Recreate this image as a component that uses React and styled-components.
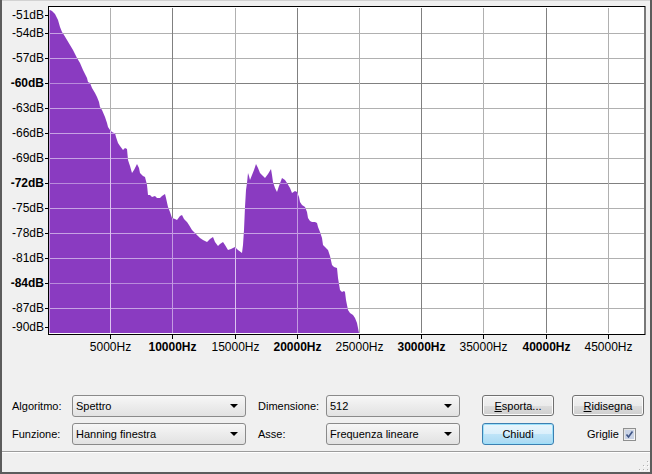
import React from "react";
import styled, { createGlobalStyle } from "styled-components";

const Global = createGlobalStyle`
  html, body { margin: 0; padding: 0; background: #f0f0f0; }
  body { font-family: "Liberation Sans", Arial, sans-serif; }
`;

const Window = styled.div`
  width: 652px;
  height: 474px;
  box-sizing: border-box;
  display: flex;
  flex-direction: column;
  background: #f0f0f0;
  box-shadow: inset 2px 0 #5c5c5c, inset -2px 0 #5c5c5c, inset 0 -2px #5c5c5c,
    inset 0 1px #d2d2d2;
  overflow: hidden;
`;

const ChartWrap = styled.div`
  height: 362px;
  flex: none;
`;

const Controls = styled.div`
  display: flex;
  flex-direction: column;
  gap: 6px;
  padding: 33px 0 0 12px;
`;

const Row = styled.div`
  display: flex;
  align-items: center;
  height: 22px;
`;

const Label = styled.span`
  width: ${(p) => p.$w}px;
  margin-left: ${(p) => p.$ml || 0}px;
  font-size: 11px;
  color: #000;
  white-space: nowrap;
`;

const SelectBox = styled.div`
  position: relative;
  box-sizing: border-box;
  width: ${(p) => p.$w}px;
  height: 22px;
  border: 1px solid #8a8a8a;
  border-radius: 3px;
  background: linear-gradient(#f7f7f7, #ececec 50%, #e2e2e2);
  display: flex;
  align-items: center;
  padding-left: 3px;
  font-size: 11px;
  color: #000;
`;

const Arrow = styled.span`
  position: absolute;
  right: 7px;
  top: 8px;
  width: 0;
  height: 0;
  border-left: 4px solid transparent;
  border-right: 4px solid transparent;
  border-top: 4px solid #000;
`;

const Button = styled.div`
  box-sizing: border-box;
  width: 72px;
  height: ${(p) => (p.$focus ? 22 : 21)}px;
  margin-left: ${(p) => p.$ml || 0}px;
  border: 1px solid ${(p) => (p.$focus ? "#3c7fb1" : "#707070")};
  border-radius: 3px;
  background: ${(p) =>
    p.$focus
      ? "linear-gradient(#e9f5fc, #d9effb 50%, #bee4f8 51%, #a9d9f3)"
      : "linear-gradient(#f2f2f2, #ebebeb 50%, #dddddd 51%, #cfcfcf)"};
  box-shadow: ${(p) =>
    p.$focus ? "inset 0 0 0 1px #9be0fa" : "inset 0 0 0 1px #fbfbfb"};
  display: flex;
  align-items: center;
  justify-content: center;
  font-size: 11px;
  color: #000;
  align-self: ${(p) => (p.$focus ? "stretch" : "flex-start")};
  u { text-decoration: underline; }
`;

const CheckGroup = styled.div`
  display: flex;
  align-items: center;
  gap: 4px;
  margin-left: ${(p) => p.$ml}px;
  font-size: 11px;
  color: #000;
`;

const CheckBox = styled.span`
  box-sizing: border-box;
  width: 13px;
  height: 13px;
  border: 1px solid #8e8f8f;
  background: linear-gradient(135deg, #dcdcdc, #fbfbfb);
  display: flex;
  align-items: center;
  justify-content: center;
`;

const Spacer = styled.div`
  flex: 1;
`;

const StatusBar = styled.div`
  position: relative;
  flex: none;
  height: 23px;
  box-sizing: border-box;
  border-top: 1px solid #9c9c9c;
  background: #f0f0f0;
  box-shadow: inset 0 1px #ffffff;
  margin: 0 2px 2px 2px;
  height: 21px;
`;

const Grip = styled.svg`
  position: absolute;
  right: 1px;
  bottom: 1px;
`;

const PLOT_L = 49;
const PLOT_R = 644;
const PLOT_T = 8;
const PLOT_B = 333;

const pts = [
  [50, 10], [52, 11], [53, 12], [55, 14], [57, 18], [58, 20], [60, 27], [62, 32], [64, 35],
  [67, 40], [70, 45], [73, 50], [75, 54], [77, 58], [80, 63], [83, 70], [87, 78], [88, 82],
  [90, 83], [92, 88], [95, 93], [97, 97], [99, 102], [100, 107], [102, 110], [105, 117],
  [107, 123], [108, 127], [110, 130], [112, 132], [114, 133], [115, 133], [116, 137],
  [118, 143], [120, 146], [123, 150], [125, 148], [127, 149], [128, 160], [130, 166],
  [132, 173], [134, 170], [137, 164], [139, 168], [140, 173], [143, 176], [145, 177],
  [147, 185], [148, 195], [150, 195], [152, 197], [155, 196], [157, 198], [160, 198],
  [162, 196], [165, 194], [166, 198], [168, 207], [170, 212], [172, 218], [175, 219],
  [177, 220], [180, 216], [182, 215], [184, 219], [187, 222], [189, 225], [192, 230],
  [195, 233], [198, 236], [200, 238], [203, 240], [205, 241], [207, 242], [210, 239],
  [213, 237], [215, 242], [218, 246], [220, 244], [223, 242], [225, 245], [228, 250],
  [231, 249], [235, 247], [238, 250], [242, 253], [243, 245], [244, 230], [245, 207],
  [246, 190], [247, 183], [248, 173], [249, 176], [250, 180], [252, 175], [254, 170],
  [256, 164], [258, 168], [260, 173], [263, 176], [265, 178], [268, 174], [271, 169],
  [272, 175], [273, 182], [275, 188], [277, 192], [279, 186], [282, 178], [285, 180],
  [287, 183], [290, 188], [292, 193], [295, 191], [297, 192], [299, 197], [300, 202],
  [302, 205], [305, 207], [307, 212], [308, 218], [310, 221], [312, 222], [315, 222],
  [317, 223], [318, 227], [320, 232], [322, 238], [323, 245], [325, 247], [328, 250],
  [330, 256], [332, 265], [334, 267], [337, 268], [338, 278], [340, 290], [342, 292],
  [344, 291], [345, 292], [346, 300], [348, 310], [350, 313], [353, 315], [355, 318],
  [357, 323], [358, 328], [359, 333],
];

const spectrumPath =
  `M${PLOT_L + 0.5},${PLOT_B} L${PLOT_L + 0.5},10 ` +
  pts.map(([x, y]) => `L${x},${y}`).join(" ") +
  " Z";

const yLabels = [
  [-51, 15], [-54, 33], [-57, 58], [-60, 83, true], [-63, 108], [-66, 133], [-69, 158],
  [-72, 183, true], [-75, 208], [-78, 233], [-81, 258], [-84, 283, true], [-87, 308],
  [-90, 327],
];

const hLines = Array.from({ length: 12 }, (_, i) => {
  const k = i + 1;
  return { y: PLOT_T + 25 * k, major: k === 3 || k === 7 || k === 11 };
});

const vLines = Array.from({ length: 9 }, (_, i) => {
  const k = i + 1;
  return { x: Math.round(48 + 62.2 * k), f: 5000 * k, major: k % 2 === 0 };
});

function Grid({ over }) {
  return (
    <g>
      {hLines.map((l) => (
        <line
          key={"h" + l.y}
          x1={PLOT_L + 1}
          x2={PLOT_R}
          y1={l.y + 0.5}
          y2={l.y + 0.5}
          stroke={over ? (l.major ? "#b98bdc" : "#c7a2e4") : l.major ? "#808080" : "#b0b0b0"}
          strokeWidth="1"
        />
      ))}
      {vLines.map((l) => (
        <line
          key={"v" + l.x}
          x1={l.x + 0.5}
          x2={l.x + 0.5}
          y1={PLOT_T}
          y2={PLOT_B}
          stroke={over ? (l.major ? "#c49be2" : "#dcc4f0") : l.major ? "#808080" : "#b0b0b0"}
          strokeWidth="1"
        />
      ))}
    </g>
  );
}

function Spectrum() {
  return (
    <svg width="652" height="362" viewBox="0 0 652 362" style={{ display: "block" }}>
      <defs>
        <clipPath id="specClip">
          <path d={spectrumPath} />
        </clipPath>
      </defs>
      <rect x={PLOT_L} y={7} width={PLOT_R - PLOT_L} height={PLOT_B - 7 + 1} fill="#ffffff" />
      <Grid over={false} />
      <path d={spectrumPath} fill="#8a3bc1" />
      <g clipPath="url(#specClip)">
        <Grid over={true} />
      </g>
      <rect
        x={PLOT_L - 0.5}
        y={6.5}
        width={PLOT_R - PLOT_L + 1.5}
        height={PLOT_B - 6 + 1}
        fill="none"
        stroke="#000"
        strokeWidth="1"
      />
      <g fontFamily="Liberation Sans, Arial, sans-serif" fontSize="12" fill="#000">
        {yLabels.map(([v, y, b]) => (
          <g key={v}>
            <text x="44" y={y + 4.3} textAnchor="end" fontWeight={b ? "bold" : "normal"}>
              {v}dB
            </text>
            <line x1="45" x2="48" y1={y + 0.5} y2={y + 0.5} stroke="#000" />
          </g>
        ))}
        {vLines.map((l) => (
          <g key={"x" + l.f}>
            <line x1={l.x + 0.5} x2={l.x + 0.5} y1={334} y2={339} stroke="#000" />
            <text
              x={l.x + 0.5}
              y={350.5}
              textAnchor="middle"
              fontWeight={l.major ? "bold" : "normal"}
            >
              {l.f}Hz
            </text>
          </g>
        ))}
      </g>
    </svg>
  );
}

function Select({ w, value }) {
  return (
    <SelectBox $w={w}>
      {value}
      <Arrow />
    </SelectBox>
  );
}

export default function App() {
  return (
    <>
      <Global />
      <Window>
        <ChartWrap>
          <Spectrum />
        </ChartWrap>
        <Controls>
          <Row>
            <Label $w={60}>Algoritmo:</Label>
            <Select w={174} value="Spettro" />
            <Label $w={68} $ml={12}>Dimensione:</Label>
            <Select w={134} value="512" />
            <Button $ml={22}>
              <u>E</u>sporta...
            </Button>
            <Button $ml={18}>
              <u>R</u>idisegna
            </Button>
          </Row>
          <Row>
            <Label $w={60}>Funzione:</Label>
            <Select w={174} value="Hanning finestra" />
            <Label $w={68} $ml={12}>Asse:</Label>
            <Select w={134} value="Frequenza lineare" />
            <Button $ml={22} $focus>
              Chiudi
            </Button>
            <CheckGroup $ml={33}>
              Griglie
              <CheckBox>
                <svg width="9" height="9" viewBox="0 0 9 9">
                  <rect x="0" y="0" width="9" height="9" fill="#c9d3e6" />
                  <path d="M1.5 4.5 L3.5 7 L7.5 1.5" fill="none" stroke="#3f5586" strokeWidth="1.6" />
                </svg>
              </CheckBox>
            </CheckGroup>
          </Row>
        </Controls>
        <Spacer />
        <StatusBar>
          <Grip width="11" height="11" viewBox="0 0 11 11">
            {[
              [9, 1], [9, 5], [9, 9], [5, 5], [5, 9], [1, 9],
            ].map(([x, y]) => (
              <g key={x + "-" + y}>
                <rect x={x} y={y} width="1" height="1" fill="#b0b0b0" />
                <rect x={x + 1} y={y + 1} width="1" height="1" fill="#ffffff" />
              </g>
            ))}
          </Grip>
        </StatusBar>
      </Window>
    </>
  );
}
